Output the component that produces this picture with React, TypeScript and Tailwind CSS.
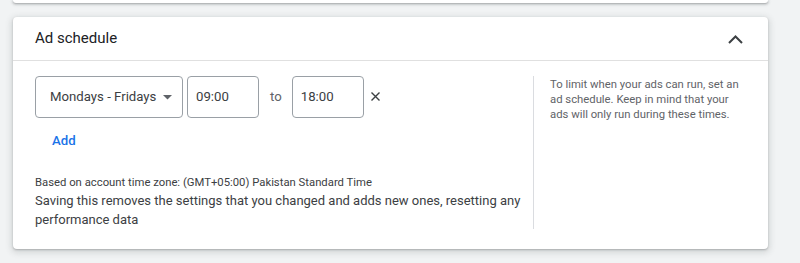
import React from 'react';

const App: React.FC = () => {
  return (
    <div className="w-full h-[263px] bg-[#f1f3f4] pl-[13px] pr-[32px] overflow-hidden font-['Roboto',sans-serif]">
      {/* card above, mostly scrolled off */}
      <div className="h-[3px] bg-white rounded-b-[4px] shadow-[0_1px_2px_rgba(60,64,67,0.3),0_1px_3px_1px_rgba(60,64,67,0.15)]"></div>

      <div className="mt-[14px] bg-white rounded-[4px] shadow-[0_1px_2px_rgba(60,64,67,0.3),0_2px_6px_2px_rgba(60,64,67,0.15)]">
        {/* header */}
        <div className="h-[44px] border-b border-[#e0e0e0] flex items-center justify-between pl-[22px] pr-[25px]">
          <span className="text-[15px] text-[#202124] leading-none">Ad schedule</span>
          <svg width="15" height="9" viewBox="0 0 15 9" className="mt-[1px]">
            <polyline points="1,8 7.5,1.5 14,8" fill="none" stroke="#3c4043" strokeWidth="2" />
          </svg>
        </div>

        {/* body */}
        <div className="flex pt-[15px] pb-[20px]">
          <div className="w-[520px] pl-[22px] shrink-0">
            <div className="flex items-center h-[42px]">
              <button className="w-[148px] h-[42px] border border-[#9aa0a6] rounded-[4px] flex items-center pl-[14px] text-[13.2px] text-[#3c4043]">
                <span>Mondays - Fridays</span>
                <svg width="9" height="5" viewBox="0 0 9 5" className="ml-[7px]">
                  <polygon points="0,0 9,0 4.5,4.5" fill="#5f6368" />
                </svg>
              </button>
              <div className="ml-[4px] w-[72px] h-[42px] border border-[#9aa0a6] rounded-[4px] flex items-center pl-[8px] text-[13.2px] text-[#3c4043]">
                09:00
              </div>
              <span className="ml-[11px] mr-[10px] text-[13.2px] text-[#5f6368]">to</span>
              <div className="w-[72px] h-[42px] border border-[#9aa0a6] rounded-[4px] flex items-center pl-[8px] text-[13.2px] text-[#3c4043]">
                18:00
              </div>
              <svg width="9" height="9" viewBox="0 0 9 9" className="ml-[7px] mb-[1px]">
                <path d="M0.5 0.5L8.5 8.5M8.5 0.5L0.5 8.5" stroke="#3c4043" strokeWidth="1.4" />
              </svg>
            </div>

            <button className="mt-[5px] h-[36px] px-[17px] text-[13.2px] font-medium text-[#1a73e8]">Add</button>

            <p className="mt-[16px] text-[11.3px] leading-[16px] text-[#3c4043]">
              Based on account time zone: (GMT+05:00) Pakistan Standard Time
            </p>
            <p className="text-[13px] leading-[19px] text-[#3c4043]">
              Saving this removes the settings that you changed and adds new ones, resetting any performance data
            </p>
          </div>

          <div className="border-l border-[#dadce0] pl-[16px] pr-[16px] pt-[1px]">
            <p className="text-[11.3px] leading-[15px] text-[#5f6368] w-[192px]">
              To limit when your ads can run, set an ad schedule. Keep in mind that your ads will only run during these times.
            </p>
          </div>
        </div>
      </div>
    </div>
  );
};

export default App;
